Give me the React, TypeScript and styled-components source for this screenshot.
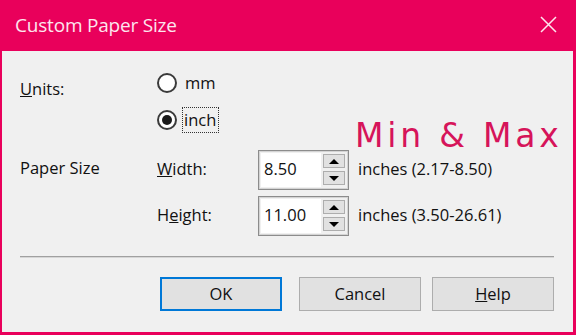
import React from 'react';
import styled, { createGlobalStyle } from 'styled-components';

const accent = '#e9005b';

const GlobalStyle = createGlobalStyle`
    html, body {
        margin: 0;
        padding: 0;
        background: #f0f0f0;
    }
    * {
        box-sizing: border-box;
    }
`

const Window = styled.div`
    width: 576px;
    height: 335px;
    display: flex;
    flex-direction: column;
    font-family: "Open Sans", "Liberation Sans", sans-serif;
    font-size: 16.5px;
    color: #111;
    position: relative;
    overflow: hidden;
`

const TitleBar = styled.div`
    height: 51px;
    flex-shrink: 0;
    background: ${accent};
    display: flex;
    align-items: center;
    justify-content: space-between;
    padding: 0 19px 2px 15px;
`

const Title = styled.div`
    color: #fde6ee;
    font-size: 19px;
    letter-spacing: -0.2px;
`

const CloseIcon = styled.svg`
    width: 17px;
    height: 17px;
    display: block;
`

const Body = styled.div`
    flex: 1;
    background: #f0f0f0;
    border: 3px solid ${accent};
    border-top: none;
    border-left-width: 2px;
    padding: 20px 19px 0 18px;
    display: flex;
    flex-direction: column;
`

const UnitsRow = styled.div`
    display: flex;
`

const Label = styled.div<{ $offset?: number }>`
    width: 137px;
    flex-shrink: 0;
    margin-top: ${p => p.$offset ?? 0}px;
    line-height: 24px;
`

const RadioGroup = styled.div`
    display: flex;
    flex-direction: column;
    gap: 13px;
`

const RadioOption = styled.label`
    display: flex;
    align-items: center;
    gap: 5px;
    height: 24px;
`

const RadioCircle = styled.span<{ $checked?: boolean }>`
    width: 20px;
    height: 20px;
    border: 2px solid #3a3a3a;
    border-radius: 50%;
    background: #fff;
    display: flex;
    align-items: center;
    justify-content: center;
    &::after {
        content: '';
        width: 10px;
        height: 10px;
        border-radius: 50%;
        background: ${p => (p.$checked ? '#1a1a1a' : 'transparent')};
    }
`

const RadioText = styled.span<{ $focused?: boolean }>`
    padding: 1px 2px 1px 1px;
    margin-left: ${p => (p.$focused ? 0 : 1)}px;
    border: 1px ${p => (p.$focused ? 'dotted #333' : 'solid transparent')};
    line-height: 22px;
`

const SizeGrid = styled.div`
    margin-top: 18px;
    display: grid;
    grid-template-columns: 137px 101px auto 1fr;
    grid-auto-rows: 40px;
    row-gap: 6px;
    align-items: center;
`

const RowLabel = styled.div<{ $lift?: number }>`
    margin-top: ${p => -(p.$lift ?? 4)}px;
`

const SpinBox = styled.div`
    display: flex;
    width: 91px;
    height: 40px;
    border: 1px solid #8c8c8c;
    box-shadow: inset 0 0 0 1px #d4d4d4;
    background: #f0f0f0;
    padding: 2px;
`

const NumberField = styled.div`
    width: 60px;
    background: #fff;
    padding: 0 0 4px 3px;
    display: flex;
    align-items: center;
`

const SpinButtons = styled.div`
    flex: 1;
    display: flex;
    flex-direction: column;
    gap: 3px;
    padding: 1px 1px 2px 2px;
`

const SpinButton = styled.div`
    flex: 1;
    background: #e1e1e1;
    border: 1px solid #adadad;
    display: flex;
    align-items: center;
    justify-content: center;
`

const Arrow = styled.span<{ $down?: boolean }>`
    width: 0;
    height: 0;
    border-left: 5px solid transparent;
    border-right: 5px solid transparent;
    ${p => (p.$down ? 'border-top: 5px solid #000;' : 'border-bottom: 5px solid #000;')}
`

const RangeText = styled.div`
    margin-left: 9px;
    margin-top: -4px;
`

const Separator = styled.div`
    margin-top: 20px;
    height: 2px;
    border-top: 1px solid #a0a0a0;
    border-bottom: 1px solid #d6d6d6;
`

const ButtonRow = styled.div`
    margin-top: 19px;
    display: flex;
    justify-content: flex-end;
    gap: 11px;
`

const Button = styled.button<{ $primary?: boolean; $extra?: number }>`
    width: 122px;
    height: 34px;
    margin-right: ${p => p.$extra ?? 0}px;
    background: #e1e1e1;
    border: ${p => (p.$primary ? '2px solid #0078d7' : '1px solid #adadad')};
    font-family: "Open Sans", "Liberation Sans", sans-serif;
    font-size: 16.5px;
    color: #111;
    padding: 0 0 2px;
`

const Annotation = styled.div`
    position: absolute;
    left: 355px;
    top: 116px;
    font-family: "DejaVu Sans", sans-serif;
    font-size: 33px;
    letter-spacing: 3.8px;
    color: #d6145a;
`

const sizes = [
    { name: 'Width:', key: 0, value: '8.50', range: 'inches (2.17-8.50)' },
    { name: 'Height:', key: 1, value: '11.00', range: 'inches (3.50-26.61)' },
]

const Mnemonic: React.FC<{ text: string; at: number }> = ({ text, at }) => (
    <>
        {text.slice(0, at)}
        <u>{text[at]}</u>
        {text.slice(at + 1)}
    </>
)

const App: React.FC = () => {
    return (
        <Window>
            <GlobalStyle />
            <TitleBar>
                <Title>Custom Paper Size</Title>
                <CloseIcon viewBox="0 0 17 17">
                    <path d="M1 1 L16 16 M16 1 L1 16" stroke="#fde6ee" strokeWidth="1.5" fill="none" />
                </CloseIcon>
            </TitleBar>
            <Body>
                <UnitsRow>
                    <Label $offset={6}><Mnemonic text="Units:" at={0} /></Label>
                    <RadioGroup>
                        <RadioOption>
                            <RadioCircle />
                            <RadioText>mm</RadioText>
                        </RadioOption>
                        <RadioOption>
                            <RadioCircle $checked />
                            <RadioText $focused>inch</RadioText>
                        </RadioOption>
                    </RadioGroup>
                </UnitsRow>
                <SizeGrid>
                    {sizes.map((s, i) => (
                        <React.Fragment key={s.name}>
                            {i === 0 ? <RowLabel $lift={6}>Paper Size</RowLabel> : <div />}
                            <RowLabel><Mnemonic text={s.name} at={s.key} /></RowLabel>
                            <SpinBox>
                                <NumberField>{s.value}</NumberField>
                                <SpinButtons>
                                    <SpinButton><Arrow /></SpinButton>
                                    <SpinButton><Arrow $down /></SpinButton>
                                </SpinButtons>
                            </SpinBox>
                            <RangeText>{s.range}</RangeText>
                        </React.Fragment>
                    ))}
                </SizeGrid>
                <Separator />
                <ButtonRow>
                    <Button $primary $extra={6}>OK</Button>
                    <Button>Cancel</Button>
                    <Button><Mnemonic text="Help" at={0} /></Button>
                </ButtonRow>
            </Body>
            <Annotation>Min &amp; Max</Annotation>
        </Window>
    );
}

export default App;
